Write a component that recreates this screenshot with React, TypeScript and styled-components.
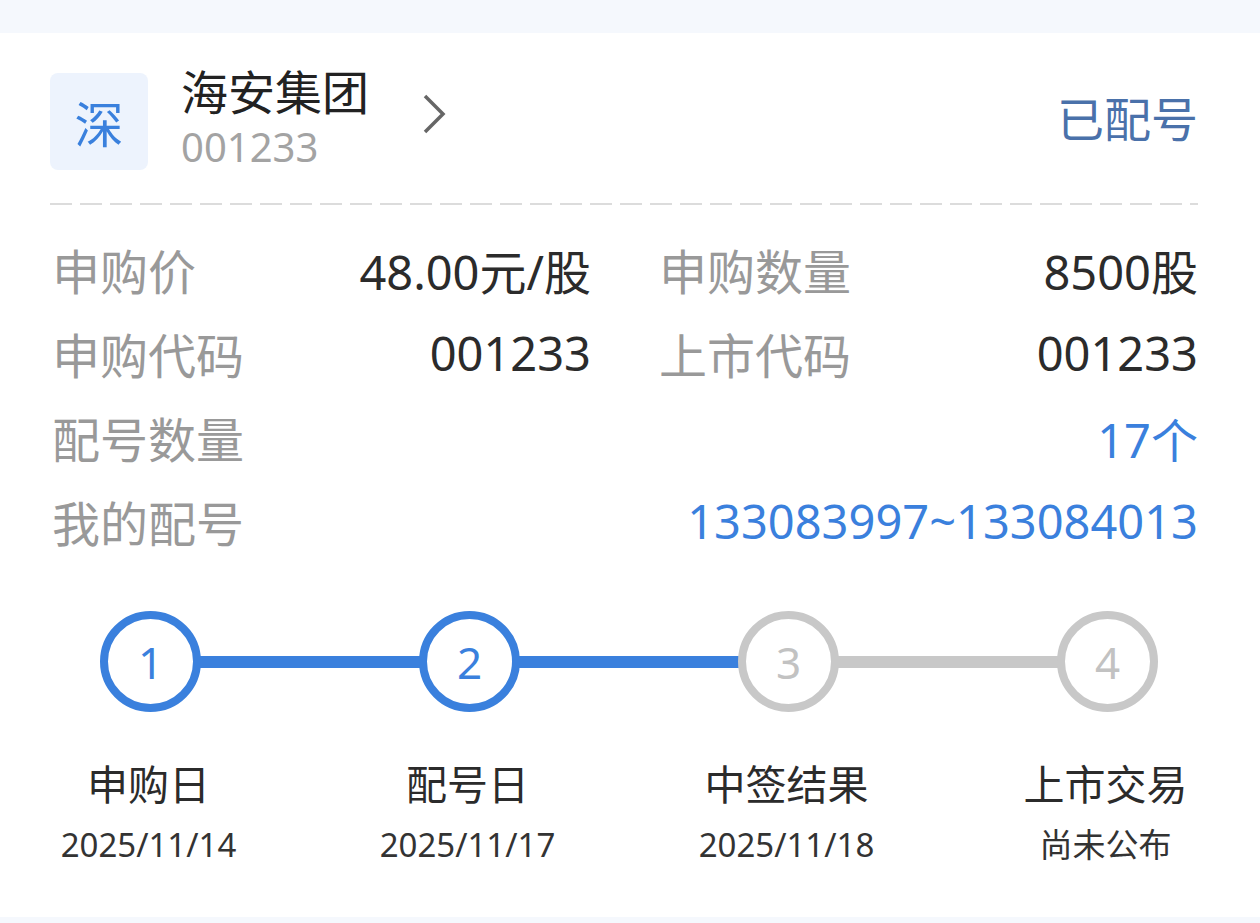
import styled, { createGlobalStyle } from "styled-components"

const GlobalStyle = createGlobalStyle`
    html, body {
        margin: 0;
        padding: 0;
        background: #f5f8fd;
        font-family: "Noto Sans", "Noto Sans CJK SC", sans-serif;
    }
`

const BLUE = "#3a80dd"
const GRAY_LINE = "#c8c8c8"

const Page = styled.div`
    padding: 33px 0 8px;
    min-height: 923px;
    box-sizing: border-box;
`

const Card = styled.div`
    background: #fff;
    padding: 36px 62px 50px 50px;
`

const Header = styled.div`
    display: flex;
    align-items: center;
    padding-bottom: 32px;
    border-bottom: 2px dashed transparent;
    background-image: linear-gradient(to right, #dcdcdc 0 22px, transparent 22px 30px);
    background-size: 30px 2px;
    background-repeat: repeat-x;
    background-position: left bottom;
`

const Badge = styled.div`
    width: 98px;
    height: 97px;
    border-radius: 8px;
    background: #edf3fd;
    color: ${BLUE};
    font-size: 49px;
    display: flex;
    align-items: center;
    justify-content: center;
    flex-shrink: 0;
`

const NameBlock = styled.div`
    display: flex;
    flex-direction: column;
    margin-left: 33px;
`

const Name = styled.div`
    font-size: 47px;
    line-height: 54px;
    color: #222;
    margin-top: -4px;
`

const SubCode = styled.div`
    font-size: 40px;
    line-height: 52px;
    color: #a3a3a3;
    margin-top: 2px;
`

const Chevron = styled.svg`
    margin-left: 52px;
    margin-top: -14px;
`

const Status = styled.div`
    margin-left: auto;
    font-size: 47px;
    color: #4a71aa;
    margin-top: -10px;
`

const Info = styled.div`
    padding-top: 20px;
    display: flex;
    flex-direction: column;
`

const Row = styled.div`
    display: flex;
    gap: 66px;
    height: 84px;
    align-items: center;
`

const Cell = styled.div`
    flex: 1;
    display: flex;
    justify-content: space-between;
    align-items: center;
`

const Label = styled.span`
    font-size: 48px;
    color: #999;
    padding-left: 2px;
`

const Value = styled.span<{ $blue?: boolean }>`
    font-size: 47px;
    color: ${p => (p.$blue ? BLUE : "#2b2b2b")};
`

const Steps = styled.div`
    margin: 48px 40px 0 50px;
    display: flex;
    align-items: center;
`

const StepCircle = styled.div<{ $active: boolean }>`
    width: 101px;
    height: 101px;
    border-radius: 50%;
    box-sizing: border-box;
    border: 8px solid ${p => (p.$active ? BLUE : GRAY_LINE)};
    color: ${p => (p.$active ? BLUE : "#c2c2c2")};
    font-size: 44px;
    display: flex;
    align-items: center;
    justify-content: center;
    flex-shrink: 0;
`

const Connector = styled.div<{ $active: boolean }>`
    flex: 1;
    height: 12px;
    background: ${p => (p.$active ? BLUE : GRAY_LINE)};
    margin: 0 -2px;
`

const Labels = styled.div`
    display: grid;
    grid-template-columns: repeat(4, 319px);
    margin: 47px 0 0 -61px;
`

const StepText = styled.div`
    display: flex;
    flex-direction: column;
    align-items: center;
`

const StepTitle = styled.div`
    font-size: 41px;
    line-height: 50px;
    color: #2b2b2b;
`

const StepDate = styled.div`
    font-size: 33px;
    line-height: 44px;
    color: #333;
    margin-top: 14px;
`

const steps = [
    { title: "申购日", date: "2025/11/14" },
    { title: "配号日", date: "2025/11/17" },
    { title: "中签结果", date: "2025/11/18" },
    { title: "上市交易", date: "尚未公布" },
]

const current = 2

export default function App() {
    return (
        <Page>
            <GlobalStyle />
            <Card>
                <Header>
                    <Badge>深</Badge>
                    <NameBlock>
                        <Name>海安集团</Name>
                        <SubCode>001233</SubCode>
                    </NameBlock>
                    <Chevron width="26" height="42" viewBox="0 0 26 42">
                        <path d="M4 3 L22 21 L4 39" fill="none" stroke="#666" strokeWidth="3.5" />
                    </Chevron>
                    <Status>已配号</Status>
                </Header>
                <Info>
                    <Row>
                        <Cell>
                            <Label>申购价</Label>
                            <Value>48.00元/股</Value>
                        </Cell>
                        <Cell>
                            <Label>申购数量</Label>
                            <Value>8500股</Value>
                        </Cell>
                    </Row>
                    <Row>
                        <Cell>
                            <Label>申购代码</Label>
                            <Value>001233</Value>
                        </Cell>
                        <Cell>
                            <Label>上市代码</Label>
                            <Value>001233</Value>
                        </Cell>
                    </Row>
                    <Row>
                        <Cell>
                            <Label>配号数量</Label>
                            <Value $blue>17个</Value>
                        </Cell>
                    </Row>
                    <Row>
                        <Cell>
                            <Label>我的配号</Label>
                            <Value $blue>133083997~133084013</Value>
                        </Cell>
                    </Row>
                </Info>
                <Steps>
                    {steps.map((s, i) => (
                        <StepGroup key={s.title} index={i} />
                    ))}
                </Steps>
                <Labels>
                    {steps.map(s => (
                        <StepText key={s.title}>
                            <StepTitle>{s.title}</StepTitle>
                            <StepDate>{s.date}</StepDate>
                        </StepText>
                    ))}
                </Labels>
            </Card>
        </Page>
    )
}

function StepGroup({ index }: { index: number }) {
    return (
        <>
            {index > 0 && <Connector $active={index <= current} />}
            <StepCircle $active={index < current}>{index + 1}</StepCircle>
        </>
    )
}
